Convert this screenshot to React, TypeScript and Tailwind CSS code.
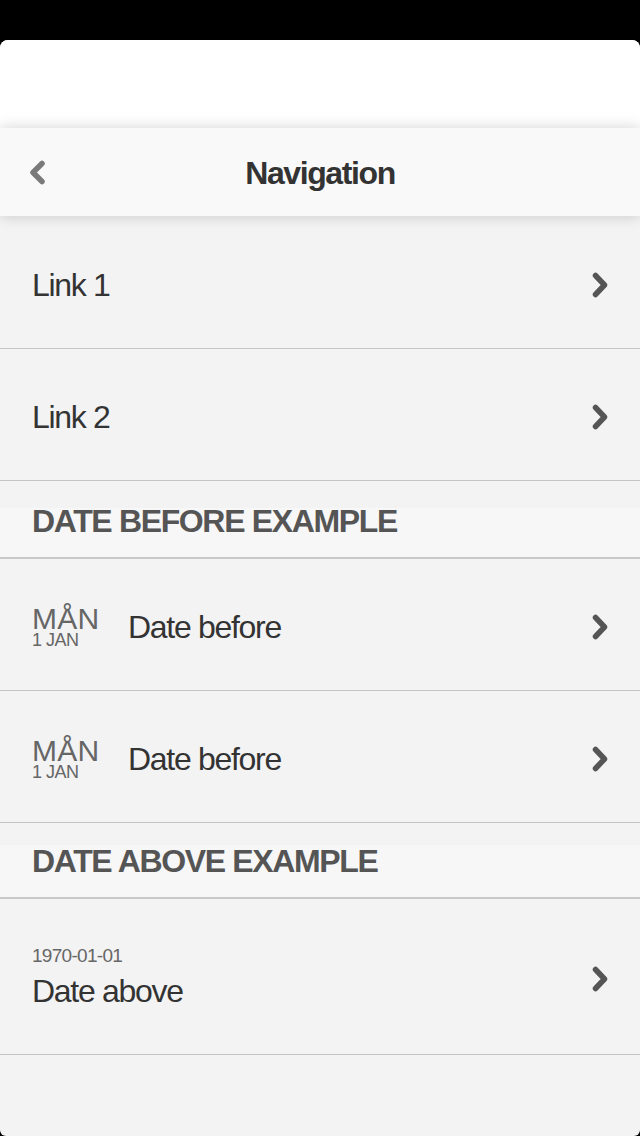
import React from "react";

const font = { fontFamily: '"Liberation Sans", Arial, Helvetica, sans-serif' };

function ChevronRight() {
  return (
    <svg width="16" height="26" viewBox="0 0 16 26" className="shrink-0">
      <polyline
        points="3.5,3.5 12.5,13 3.5,22.5"
        fill="none"
        stroke="#555555"
        strokeWidth="5.5"
        strokeLinecap="round"
        strokeLinejoin="round"
      />
    </svg>
  );
}

function ChevronLeft() {
  return (
    <svg width="17" height="25" viewBox="0 0 17 25" className="shrink-0">
      <polyline
        points="13,3.5 4,12.5 13,21.5"
        fill="none"
        stroke="#7a7a7a"
        strokeWidth="5.5"
        strokeLinecap="round"
        strokeLinejoin="round"
      />
    </svg>
  );
}

function LinkRow({ label, h }: { label: string; h: string }) {
  return (
    <div className={`flex items-center justify-between border-b border-[#c4c4c4] pl-[32px] pr-[32px] pt-[5px] ${h}`}>
      <span className="text-[32px] leading-[32px] tracking-[-1.3px] text-[#333333]">{label}</span>
      <ChevronRight />
    </div>
  );
}

function DateBeforeRow() {
  return (
    <div className="flex h-[132px] items-center justify-between border-b border-[#c4c4c4] pl-[32px] pr-[32px] pt-[5px]">
      <div className="flex items-center gap-[29px]">
        <div className="flex w-[67px] flex-col text-[#666666]">
          <span className="text-[30px] leading-[23px] tracking-[0.3px]">MÅN</span>
          <span className="mt-[2px] text-[18px] leading-[16px] tracking-[-0.5px]">1 JAN</span>
        </div>
        <span className="text-[32px] leading-[32px] tracking-[-1.3px] text-[#333333]">Date before</span>
      </div>
      <ChevronRight />
    </div>
  );
}

function SectionHeader({ label, top, band }: { label: string; top: string; band: string }) {
  return (
    <div className={`${top} bg-[#f3f3f3]`}>
      <div className={`${band} border-b-2 border-[#c8c8c8] bg-[#f7f7f7] pl-[32px]`}>
        <span className="block text-[32px] font-bold leading-[26px] tracking-[-1.35px] text-[#555555]">{label}</span>
      </div>
    </div>
  );
}

export default function App() {
  return (
    <div className="min-h-[1136px] bg-black pt-[40px]" style={font}>
      <div className="flex h-[1096px] flex-col overflow-hidden rounded-t-[8px] rounded-b-[6px] bg-[#f3f3f3]">
        <div className="h-[88px] shrink-0 bg-white" />
        <div className="relative z-10 grid h-[88px] shrink-0 grid-cols-[1fr_auto_1fr] items-center bg-[#f9f9f9] pt-[1px] shadow-[0_0_14px_rgba(0,0,0,0.18)]">
          <div className="pl-[29px]">
            <ChevronLeft />
          </div>
          <span className="text-[32px] font-bold leading-[32px] tracking-[-1.4px] text-[#333333]">Navigation</span>
          <div />
        </div>
        <LinkRow label="Link 1" h="h-[133px]" />
        <LinkRow label="Link 2" h="h-[132px]" />
        <SectionHeader label="DATE BEFORE EXAMPLE" top="pt-[27px]" band="h-[51px]" />
        <DateBeforeRow />
        <DateBeforeRow />
        <SectionHeader label="DATE ABOVE EXAMPLE" top="pt-[22px]" band="h-[54px] pt-[3px]" />
        <div className="flex h-[156px] items-center justify-between border-b border-[#c4c4c4] pl-[32px] pr-[32px]">
          <div className="flex flex-col">
            <span className="text-[19px] leading-[20px] tracking-[-0.7px] text-[#666666]">1970-01-01</span>
            <span className="mt-[9px] text-[32px] leading-[32px] tracking-[-1.3px] text-[#333333]">Date above</span>
          </div>
          <div className="mt-[4px]">
            <ChevronRight />
          </div>
        </div>
      </div>
    </div>
  );
}
